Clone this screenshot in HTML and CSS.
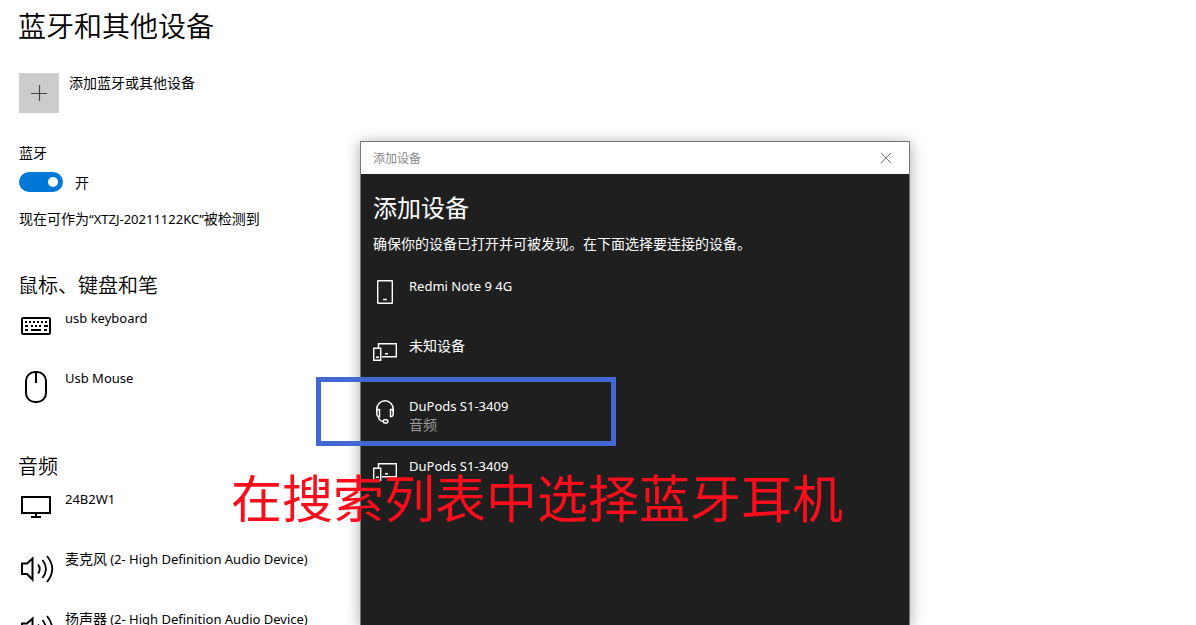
FILE: index.html
```html
<!DOCTYPE html>
<html lang="zh-CN">
<head>
<meta charset="utf-8">
<meta name="viewport" content="width=device-width, initial-scale=1">
<title>蓝牙和其他设备</title>
<link rel="stylesheet" href="styles.css">
</head>
<body>
<svg width="0" height="0" class="defs" aria-hidden="true">
  <symbol id="speaker" viewBox="0 0 36 40">
    <path d="M4 15.500h5l5.500-5v21l-5.500-5.500h-5z" fill="none" stroke="currentColor" stroke-width="2"/>
    <path d="M20 16.500q3.500 4.500 0 9M24.500 12q7 9 0 18M29 8q10.500 13 0 26" fill="none" stroke="currentColor" stroke-width="1.800"/>
  </symbol>
  <symbol id="devices" viewBox="0 0 24 30">
    <path d="M5.500 12V7.700h17.800v13H9" fill="none" stroke="currentColor" stroke-width="1.400"/>
    <path d="M.7 12.200h7v12h-7z" fill="none" stroke="currentColor" stroke-width="1.400"/>
    <path d="M12 17h3v1.500h-3zM3 20.500h3V22H3z" fill="currentColor"/>
  </symbol>
</svg>
<main class="settings">
  <h1 class="page-title">蓝牙和其他设备</h1>
  <button class="add-device" type="button">
    <span class="add-tile"><svg width="40" height="40" viewBox="0 0 40 40" aria-hidden="true"><path d="M12 20.500h16M20.500 12v16" stroke="#444" stroke-width="1.200"/></svg></span>
    <span>添加蓝牙或其他设备</span>
  </button>
  <label class="toggle-label" for="bt">蓝牙</label>
  <div class="toggle-row">
    <input id="bt" class="switch" type="checkbox" role="switch" checked>
    <span>开</span>
  </div>
  <p class="discoverable">现在可作为<span class="latin">“XTZJ-20211122KC”</span>被检测到</p>

  <h2 class="section-title first">鼠标、键盘和笔</h2>
  <ul class="device-list">
    <li class="device">
      <svg width="36" height="40" viewBox="0 0 36 40" aria-hidden="true">
        <rect x="4" y="11" width="28" height="16" rx="1" fill="none" stroke="#000" stroke-width="2"/>
        <path d="M7 15h2m2 0h2m2 0h2m2 0h2m2 0h2m2 0h2M7 19h3m3 0h2m2 0h2m2 0h2m3 0h4M7 23h3m3 0h10m3 0h3" stroke="#000" stroke-width="2"/>
      </svg>
      <span><span class="latin">usb keyboard</span></span>
    </li>
    <li class="device">
      <svg width="36" height="40" viewBox="0 0 36 40" aria-hidden="true">
        <rect x="8" y="5" width="20" height="30" rx="9" fill="none" stroke="#000" stroke-width="2"/>
        <path d="M18 5v11" stroke="#000" stroke-width="2"/>
      </svg>
      <span><span class="latin">Usb Mouse</span></span>
    </li>
  </ul>

  <h2 class="section-title">音频</h2>
  <ul class="device-list">
    <li class="device">
      <svg width="36" height="40" viewBox="0 0 36 40" aria-hidden="true">
        <path d="M4 9h28v16H4zM18 25v4M13 29h10" fill="none" stroke="#000" stroke-width="2"/>
      </svg>
      <span><span class="latin">24B2W1</span></span>
    </li>
    <li class="device">
      <svg width="36" height="40" aria-hidden="true"><use href="#speaker"/></svg>
      <span>麦克风 <span class="latin">(2- High Definition Audio Device)</span></span>
    </li>
    <li class="device">
      <svg width="36" height="40" aria-hidden="true"><use href="#speaker"/></svg>
      <span>扬声器 <span class="latin">(2- High Definition Audio Device)</span></span>
    </li>
  </ul>
</main>

<section class="dialog" role="dialog" aria-labelledby="dialog-title">
  <header class="titlebar">
    <span>添加设备</span>
    <button class="close" type="button" aria-label="关闭"><svg width="12" height="12" viewBox="0 0 12 12" aria-hidden="true"><path d="M1 1l10 10M11 1L1 11" stroke="#777" stroke-width="1"/></svg></button>
  </header>
  <div class="dialog-body">
    <h2 id="dialog-title" class="dialog-title">添加设备</h2>
    <p class="hint">确保你的设备已打开并可被发现。在下面选择要连接的设备。</p>
    <ul class="found-list">
      <li><button class="found" type="button">
        <svg width="24" height="30" viewBox="0 0 24 30" aria-hidden="true"><rect x="4.700" y="4.700" width="14.600" height="22.600" rx=".5" fill="none" stroke="#fff" stroke-width="1.400"/><path d="M10 23.500h4" stroke="#fff" stroke-width="1.500"/></svg>
        <span><span class="latin">Redmi Note 9 4G</span></span>
      </button></li>
      <li><button class="found" type="button">
        <svg width="24" height="30" aria-hidden="true"><use href="#devices"/></svg>
        <span>未知设备</span>
      </button></li>
      <li><button class="found" type="button">
        <svg width="24" height="30" viewBox="0 0 24 30" aria-hidden="true"><g fill="none" stroke="#fff" stroke-width="1.500"><path d="M3.800 16v-3a8.200 8.200 0 0 1 16.400 0v3"/><path d="M3.800 13.500h2.700v7H5.300q-1.500-.5-1.500-2.500zM20.200 13.500h-2.700v7h1.200q1.500-.5 1.500-2.500z"/><path d="M5.300 20.500q.7 4.500 5 5"/><rect x="10.300" y="23.700" width="4.600" height="3.200" rx="1.500"/></g></svg>
        <span><span class="latin">DuPods S1-3409</span><small class="kind">音频</small></span>
      </button></li>
      <li><button class="found" type="button">
        <svg width="24" height="30" aria-hidden="true"><use href="#devices"/></svg>
        <span><span class="latin">DuPods S1-3409</span></span>
      </button></li>
    </ul>
  </div>
</section>

<div class="highlight"></div>
<p class="caption">在搜索列表中选择蓝牙耳机</p>
</body>
</html>
```
FILE: styles.css
```css
* { box-sizing: border-box; }

body {
  position: relative;
  height: 100vh;
  margin: 0;
  overflow: hidden;
  background: #fff;
  color: #000;
  font: 14px/20px "Noto Sans CJK SC", sans-serif;
}

h1, h2, p, ul { margin: 0; padding: 0; font-weight: 400; }
ul { list-style: none; }
svg { display: block; flex: none; }
button { padding: 0; border: 0; background: none; color: inherit; font: inherit; text-align: left; }

.defs { position: absolute; }
.latin { font-family: "Noto Sans", "Noto Sans CJK SC", sans-serif; font-size: 13px; line-height: 1; }

.settings { padding: 7px 18px 0; }
.page-title { font-size: 28px; font-weight: 350; line-height: 36px; }

.add-device { display: flex; gap: 10px; margin: 30px 0 29px 1px; line-height: 18px; }
.add-tile { background: #ccc; }

.toggle-label { display: block; margin-left: 1px; }
.toggle-row { display: flex; gap: 12px; margin: 10px 0 16px 1px; }
.switch {
  display: flex;
  align-items: center;
  justify-content: flex-end;
  width: 44px;
  height: 20px;
  margin: 0;
  padding: 0 5px;
  border-radius: 10px;
  background: #0078d7;
  appearance: none;
}
.switch::before { content: ""; width: 10px; height: 10px; border-radius: 50%; background: #fff; }
.switch:not(:checked) { justify-content: flex-start; background: #888; }
.discoverable { margin-left: 1px; }

.section-title { margin: 25px 0 8px; font-size: 20px; font-weight: 350; line-height: 28px; }
.section-title.first { margin-top: 43px; }
.device { display: flex; gap: 11px; height: 60px; }

.dialog {
  position: absolute;
  top: 141px;
  bottom: 0;
  left: 360px;
  display: flex;
  flex-direction: column;
  width: 46%;
  border: 1px solid #777;
  border-bottom: 0;
  background: #1f1f1f;
  box-shadow: 0 2px 14px rgba(0, 0, 0, .35);
  color: #fff;
}
.titlebar {
  display: flex;
  align-items: center;
  justify-content: space-between;
  height: 32px;
  padding: 0 17px 0 12px;
  background: #fff;
  color: #888;
  font-size: 12px;
}
.dialog-body { padding: 17px 12px 0; }
.dialog-title { font-size: 24px; line-height: 32px; }
.hint { margin: 10px 0 23px; }
.found { display: flex; gap: 12px; width: 100%; height: 60px; line-height: 18px; }
.kind { display: block; color: #999; font-size: 14px; line-height: 20px; }

.highlight {
  position: absolute;
  top: 377px;
  left: 316px;
  width: 300px;
  height: 69px;
  border: 5px solid #4467d2;
}
.caption {
  position: absolute;
  top: 464px;
  left: 231px;
  color: #fc0d1b;
  font-size: 51px;
  line-height: 64px;
  white-space: nowrap;
}
```
